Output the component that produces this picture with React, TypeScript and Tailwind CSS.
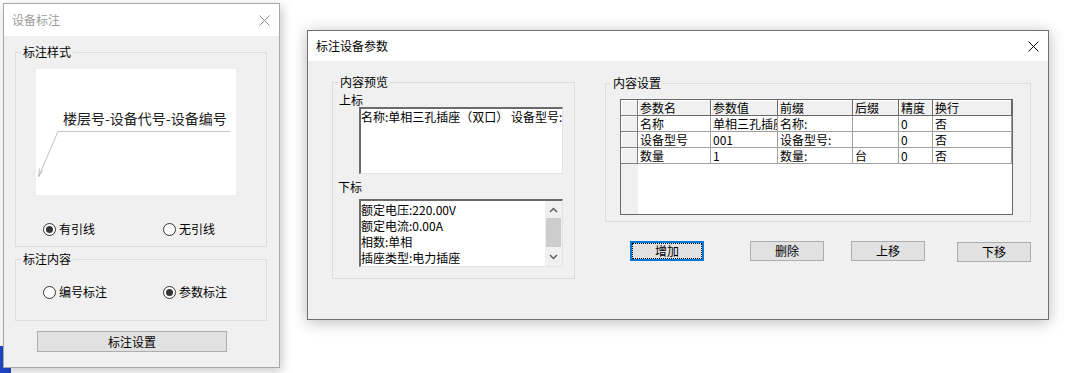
import React from 'react';

type RadioProps = { checked?: boolean; label: string };

const Radio: React.FC<RadioProps> = ({ checked, label }) => (
  <div className="flex items-center gap-[3px] leading-[16px]">
    <span className="w-[13px] h-[13px] rounded-full border border-[#333333] bg-white flex items-center justify-center">
      {checked && <span className="w-[7px] h-[7px] rounded-full bg-[#333333]" />}
    </span>
    <span>{label}</span>
  </div>
);

const CloseIcon: React.FC<{ className: string }> = ({ className }) => (
  <svg width="11" height="11" viewBox="0 0 11 11" className={className}>
    <path d="M0.5 0.5L10.5 10.5M10.5 0.5L0.5 10.5" stroke="currentColor" strokeWidth="1" />
  </svg>
);

const Button: React.FC<{ label: string; className?: string; focused?: boolean }> = ({ label, className, focused }) =>
  focused ? (
    <div className={`w-[74px] h-[20px] border-2 border-[#0078d7] bg-[#e1e1e1] ${className ?? ''}`}>
      <div className="w-full h-full border border-dotted border-black flex items-center justify-center leading-[14px]">
        {label}
      </div>
    </div>
  ) : (
    <div className={`w-[74px] h-[20px] border border-[#adadad] bg-[#e1e1e1] flex items-center justify-center leading-[16px] ${className ?? ''}`}>
      {label}
    </div>
  );

const LeftWindow: React.FC = () => (
  <div className="absolute left-[3px] top-[3px] w-[277px] h-[365px] border border-[#a8a8a8] bg-[#f0f0f0] shadow-[2px_3px_10px_rgba(0,0,0,0.22)] flex flex-col">
    <div className="h-[32px] shrink-0 bg-white flex items-center justify-between pl-[8px] pr-[9px]">
      <span className="text-[#9a9a9a]">设备标注</span>
      <CloseIcon className="text-[#8a8a8a]" />
    </div>

    <fieldset className="mt-[8px] ml-[11px] w-[252px] border border-[#dcdcdc] pb-[9px]">
      <legend className="ml-[5px] px-[2px] leading-[16px]">标注样式</legend>
      <div className="relative mt-[9px] ml-[20px] w-[200px] h-[126px] bg-white pt-[40px] pl-[27px] text-[14px] leading-[18px] text-[#222222]">
        楼层号-设备代号-设备编号
        <svg className="absolute left-0 top-0" width="200" height="126" viewBox="0 0 200 126">
          <path d="M22 62.5H194" stroke="#c4c4c4" strokeWidth="1" />
          <path d="M22 62.5L2.5 108" stroke="#c0c0c0" strokeWidth="1" fill="none" />
          <path d="M2.5 108L3.5 99.5M2.5 108L6.5 101.5" stroke="#c0c0c0" strokeWidth="1" fill="none" />
        </svg>
      </div>
      <div className="mt-[26px] ml-[27px] flex">
        <div className="w-[120px]">
          <Radio checked label="有引线" />
        </div>
        <Radio label="无引线" />
      </div>
    </fieldset>

    <fieldset className="mt-[4px] ml-[11px] w-[252px] border border-[#dcdcdc] pb-[20px]">
      <legend className="ml-[5px] px-[2px] leading-[16px]">标注内容</legend>
      <div className="mt-[17px] ml-[27px] flex">
        <div className="w-[120px]">
          <Radio label="编号标注" />
        </div>
        <Radio checked label="参数标注" />
      </div>
    </fieldset>

    <div className="mt-[10px] ml-[33px] w-[190px] h-[21px] border border-[#adadad] bg-[#e1e1e1] flex items-center justify-center leading-[16px]">
      标注设置
    </div>
  </div>
);

const cols = ['w-[17px]', 'w-[73px]', 'w-[67px]', 'w-[75px]', 'w-[46px]', 'w-[34px]', 'w-[79px]'];
const headers = ['参数名', '参数值', '前缀', '后缀', '精度', '换行'];
const rows = [
  ['名称', '单相三孔插座（双口）', '名称:', '', '0', '否'],
  ['设备型号', '001', '设备型号:', '', '0', '否'],
  ['数量', '1', '数量:', '台', '0', '否'],
];

const ParamGrid: React.FC = () => (
  <div className="ml-[14px] mt-[8px] w-[393px] h-[116px] border border-[#696969] bg-white flex flex-col">
    <table className="table-fixed border-separate border-spacing-0 w-[391px]">
      <colgroup>
        {cols.map((c, i) => (
          <col key={i} className={c} />
        ))}
      </colgroup>
      <thead>
        <tr>
          <th className="h-[16px] p-0 border-r border-b border-[#808080] bg-[#f0f0f0] shadow-[inset_1px_1px_0_#ffffff]" />
          {headers.map((h) => (
            <th
              key={h}
              className="h-[16px] p-0 pl-[2px] text-left font-normal leading-[15px] whitespace-nowrap overflow-hidden border-r border-b border-[#696969] bg-[#f0f0f0] shadow-[inset_1px_1px_0_#ffffff]"
            >
              {h}
            </th>
          ))}
        </tr>
      </thead>
      <tbody>
        {rows.map((r, ri) => (
          <tr key={ri}>
            <td className="h-[16px] p-0 border-r border-b border-[#808080] bg-[#f0f0f0] shadow-[inset_1px_1px_0_#ffffff]" />
            {r.map((v, ci) => (
              <td
                key={ci}
                className="h-[16px] p-0 pl-[2px] leading-[15px] whitespace-nowrap overflow-hidden border-r border-b border-[#a0a0a0] bg-white"
              >
                {v}
              </td>
            ))}
          </tr>
        ))}
      </tbody>
    </table>
    <div className="flex flex-1">
      <div className="w-[17px] bg-[#f0f0f0]" />
      <div className="flex-1 bg-white" />
    </div>
  </div>
);

const RightWindow: React.FC = () => (
  <div className="absolute left-[307px] top-[30px] w-[742px] h-[290px] border border-[#707070] bg-[#f0f0f0] shadow-[0_2px_14px_rgba(0,0,0,0.28)] flex flex-col">
    <div className="h-[30px] shrink-0 bg-white flex items-center justify-between pl-[8px] pr-[9px]">
      <span>标注设备参数</span>
      <CloseIcon className="text-black" />
    </div>

    <div className="flex items-start">
      <fieldset className="mt-[13px] ml-[24px] w-[243px] border border-[#dcdcdc] pb-[11px]">
        <legend className="ml-[5px] px-[2px] leading-[16px]">内容预览</legend>
        <div className="mt-[2px] pl-[6px] leading-[15px]">上标</div>
        <div className="ml-[26px] w-[204px] h-[67px] bg-white border-t-2 border-l-2 border-t-[#6a6a6a] border-l-[#6a6a6a] border-r border-b border-r-[#e3e3e3] border-b-[#e3e3e3] overflow-hidden whitespace-nowrap leading-[16px]">
          名称:单相三孔插座（双口） 设备型号:
        </div>
        <div className="mt-[5px] pl-[5px] leading-[16px]">下标</div>
        <div className="mt-[4px] ml-[26px] w-[204px] h-[68px] bg-white border-t-2 border-l-2 border-t-[#6a6a6a] border-l-[#6a6a6a] border-r border-b border-r-[#e3e3e3] border-b-[#e3e3e3] flex">
          <div className="flex-1 pt-[1px] leading-[16px] overflow-hidden whitespace-nowrap">
            <div>额定电压:220.00V</div>
            <div>额定电流:0.00A</div>
            <div>相数:单相</div>
            <div>插座类型:电力插座</div>
          </div>
          <div className="w-[17px] bg-[#f0f0f0] flex flex-col items-center">
            <div className="h-[17px] flex items-center justify-center">
              <svg width="9" height="6" viewBox="0 0 9 6">
                <path d="M1 5L4.5 1.5L8 5" stroke="#606060" strokeWidth="1.5" fill="none" />
              </svg>
            </div>
            <div className="w-[15px] h-[29px] bg-[#cdcdcd]" />
            <div className="flex-1 flex items-center justify-center">
              <svg width="9" height="6" viewBox="0 0 9 6">
                <path d="M1 1L4.5 4.5L8 1" stroke="#606060" strokeWidth="1.5" fill="none" />
              </svg>
            </div>
          </div>
        </div>
      </fieldset>

      <div className="ml-[30px] mt-[14px]">
        <fieldset className="w-[426px] border border-[#dcdcdc] pb-[6px]">
          <legend className="ml-[5px] px-[2px] leading-[16px]">内容设置</legend>
          <ParamGrid />
        </fieldset>
        <div className="mt-[19px] flex items-start">
          <Button label="增加" focused className="ml-[25px]" />
          <Button label="删除" className="ml-[46px]" />
          <Button label="上移" className="ml-[27px]" />
          <Button label="下移" className="ml-[32px] mt-[1px]" />
        </div>
      </div>
    </div>
  </div>
);

export default function App() {
  return (
    <div className="relative w-[1073px] h-[373px] overflow-hidden bg-white text-[12px] text-black [font-family:'Noto_Sans_CJK_SC',sans-serif]">
      <div className="absolute left-0 top-[346px] w-[11px] h-[27px] bg-[#2246c8] rounded-tr-[2px]" />
      <LeftWindow />
      <RightWindow />
    </div>
  );
}
